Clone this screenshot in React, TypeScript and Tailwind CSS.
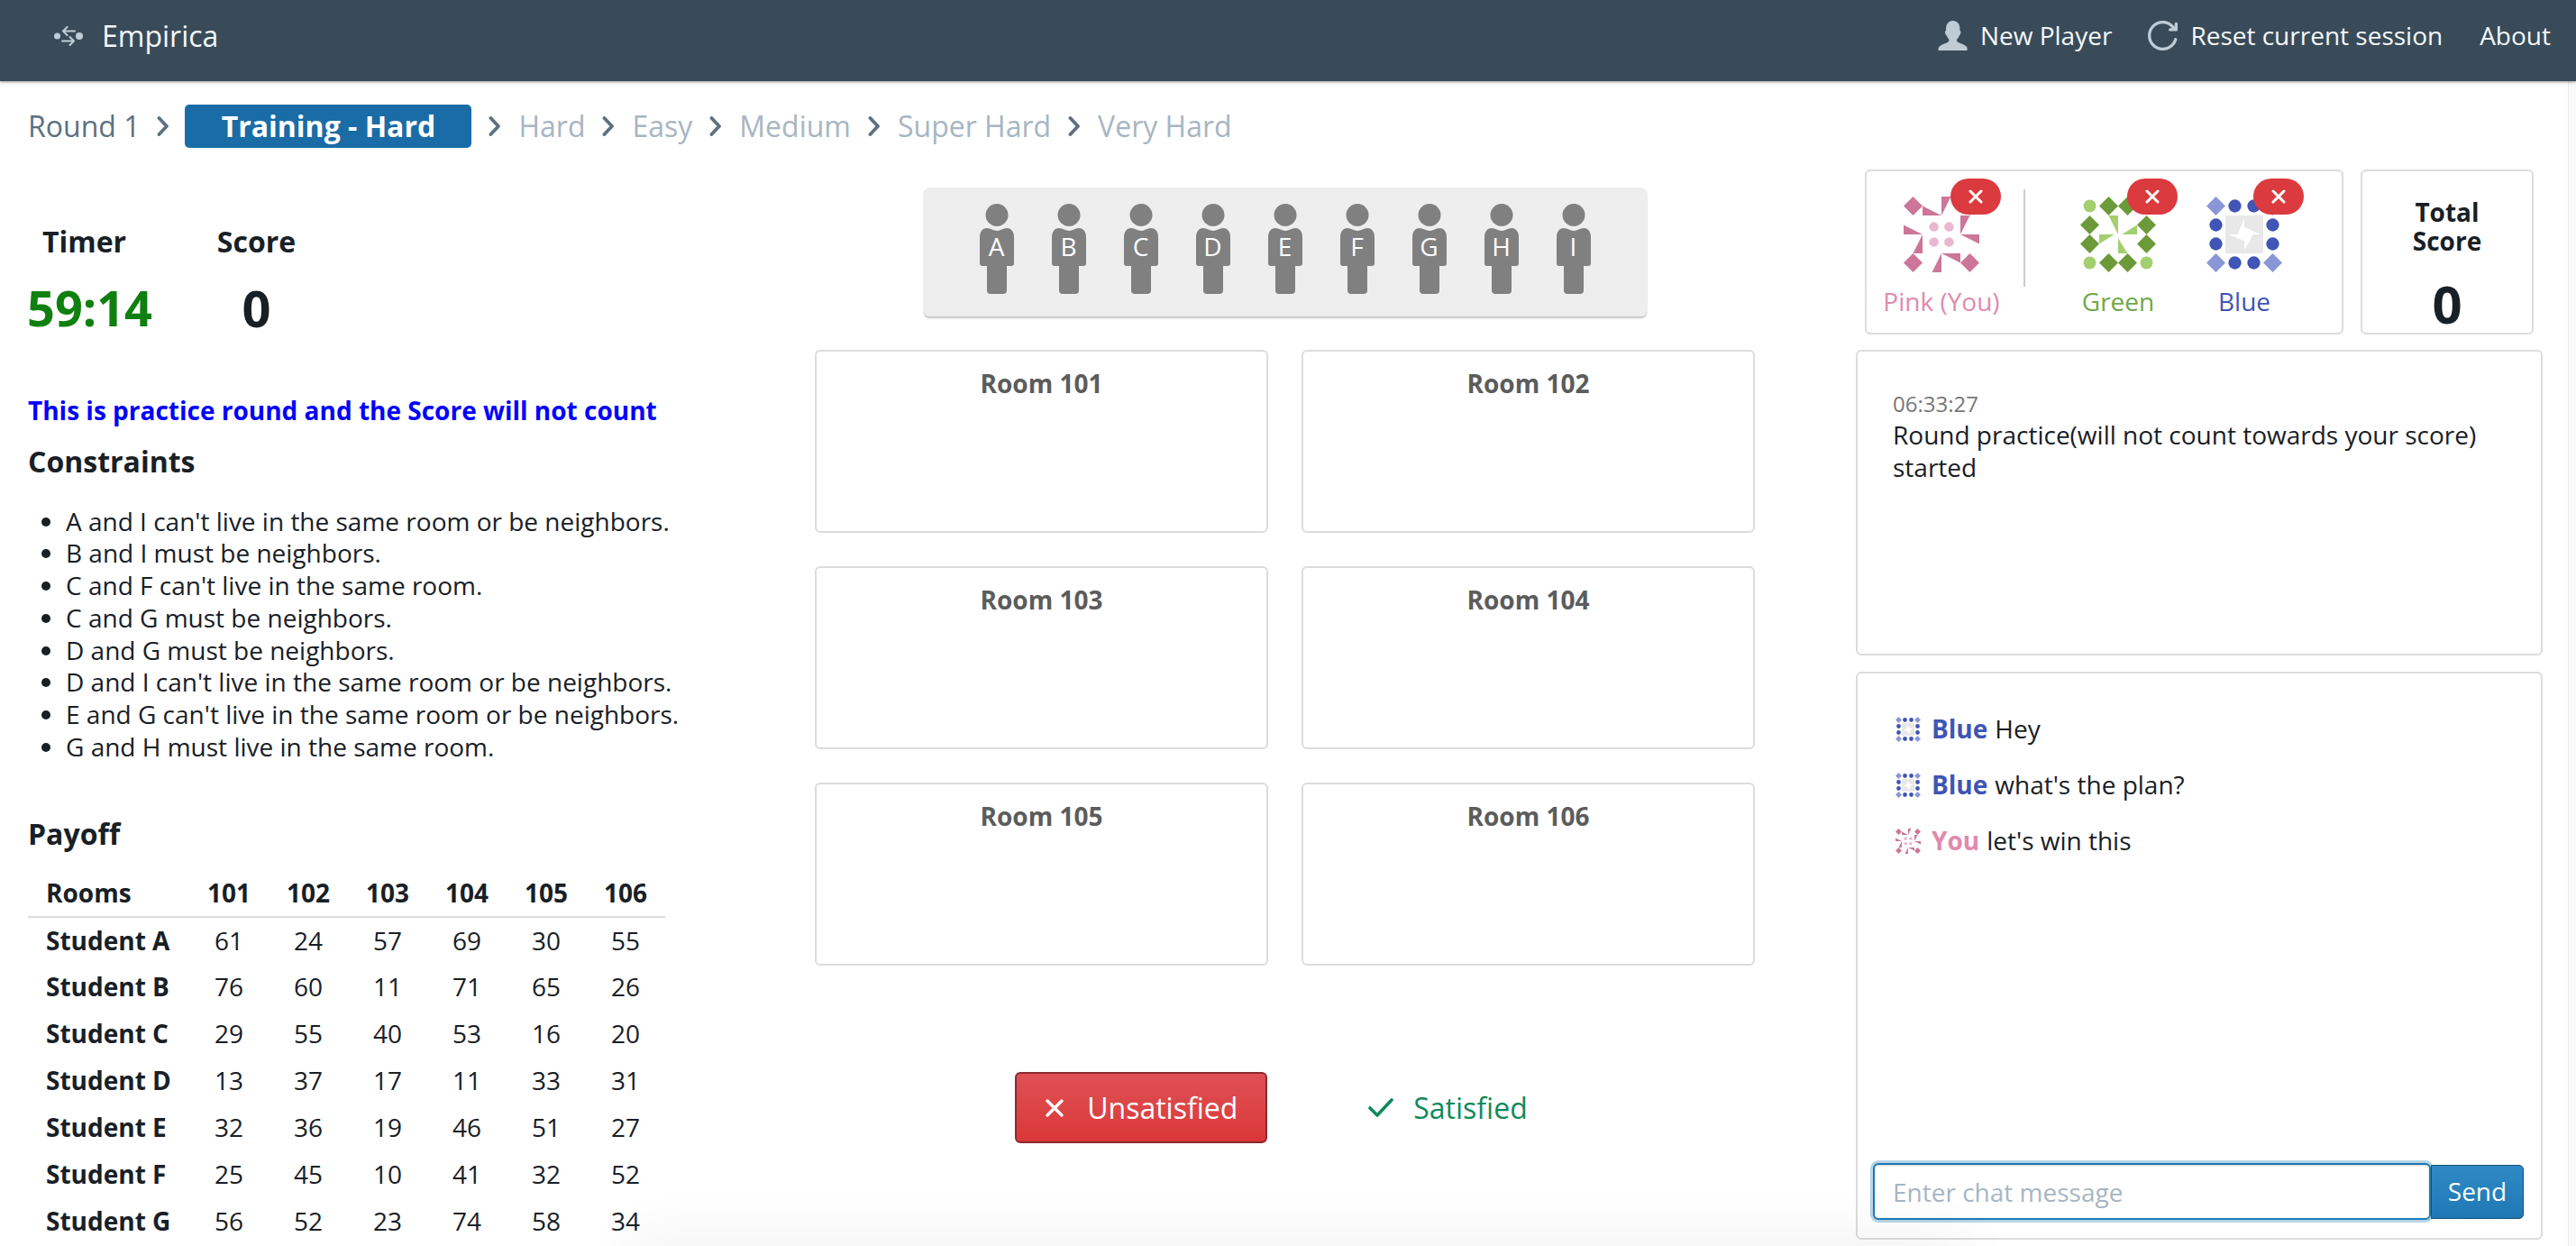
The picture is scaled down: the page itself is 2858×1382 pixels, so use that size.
const constraints = [
  "A and I can't live in the same room or be neighbors.",
  'B and I must be neighbors.',
  "C and F can't live in the same room.",
  'C and G must be neighbors.',
  'D and G must be neighbors.',
  "D and I can't live in the same room or be neighbors.",
  "E and G can't live in the same room or be neighbors.",
  'G and H must live in the same room.',
];

const payoff: [string, number[]][] = [
  ['Student A', [61, 24, 57, 69, 30, 55]],
  ['Student B', [76, 60, 11, 71, 65, 26]],
  ['Student C', [29, 55, 40, 53, 16, 20]],
  ['Student D', [13, 37, 17, 11, 33, 31]],
  ['Student E', [32, 36, 19, 46, 51, 27]],
  ['Student F', [25, 45, 10, 41, 32, 52]],
  ['Student G', [56, 52, 23, 74, 58, 34]],
];

const upcoming = ['Hard', 'Easy', 'Medium', 'Super Hard', 'Very Hard'];
const students = ['A', 'B', 'C', 'D', 'E', 'F', 'G', 'H', 'I'];
const rooms = [101, 102, 103, 104, 105, 106];

function Chevron() {
  return (
    <svg width="14" height="22" viewBox="0 0 14 22" className="mx-[19px] shrink-0">
      <path d="M2.5 2 L11 11 L2.5 20" fill="none" stroke="#5c7080" strokeWidth="3.8" strokeLinecap="round" strokeLinejoin="round" />
    </svg>
  );
}

function Diamond({ x, y, fill }: { x: number; y: number; fill: string }) {
  return <polygon points={`${x + 0.5},${y} ${x + 1},${y + 0.5} ${x + 0.5},${y + 1} ${x},${y + 0.5}`} fill={fill} />;
}

function PinkIcon({ size = 84 }: { size?: number }) {
  const c = '#cc7799';
  return (
    <svg width={size} height={size} viewBox="0 0 4 4">
      <Diamond x={0} y={0} fill={c} />
      <Diamond x={3} y={0} fill={c} />
      <Diamond x={0} y={3} fill={c} />
      <Diamond x={3} y={3} fill={c} />
      <g fill={c}>
        <polygon points="1,0.5 1,1 2,1" />
        <polygon points="2,0 2.5,0 2,1" />
        <polygon points="3,1 3.5,1 3,2" />
        <polygon points="3,2 4,2 4,2.5" />
        <polygon points="0,1.5 1,2 0,2" />
        <polygon points="1,2 1,3 0.5,3" />
        <polygon points="2,3 3,3 3,3.5" />
        <polygon points="2,3 2,4 1.5,4" />
      </g>
      <g fill="#e8b8d0">
        <circle cx="1.6" cy="1.6" r="0.25" />
        <circle cx="2.4" cy="1.6" r="0.25" />
        <circle cx="1.6" cy="2.4" r="0.25" />
        <circle cx="2.4" cy="2.4" r="0.25" />
      </g>
    </svg>
  );
}

function GreenIcon({ size = 84 }: { size?: number }) {
  const dark = '#6d9a38';
  const light = '#a3cf6f';
  return (
    <svg width={size} height={size} viewBox="0 0 4 4">
      {[[1, 0], [2, 0], [0, 1], [0, 2], [3, 1], [3, 2], [1, 3], [2, 3]].map(([x, y]) => (
        <Diamond key={`${x}${y}`} x={x} y={y} fill={dark} />
      ))}
      <g fill={light}>
        <circle cx="0.5" cy="0.5" r="0.33" />
        <circle cx="3.5" cy="0.5" r="0.33" />
        <circle cx="0.5" cy="3.5" r="0.33" />
        <circle cx="3.5" cy="3.5" r="0.33" />
        <polygon points="1.5,1 2,1 2,2" />
        <polygon points="3,1.5 3,2 2.2,2" />
        <polygon points="1,2 1.8,2 1,2.5" />
        <polygon points="2,2.2 2,3 2.5,3" />
      </g>
    </svg>
  );
}

function BlueIcon({ size = 84 }: { size?: number }) {
  const light = '#8a97d6';
  const dark = '#4055b5';
  return (
    <svg width={size} height={size} viewBox="0 0 4 4">
      <rect x="1" y="1" width="2" height="2" fill="#e8e8e8" />
      <polygon points="2,1.16 1.65,2 1.17,2 2,2.35 2,2.83 2.48,2 2.83,2 2,1.6" fill="#ffffff" />
      <Diamond x={0} y={0} fill={light} />
      <Diamond x={3} y={0} fill={light} />
      <Diamond x={0} y={3} fill={light} />
      <Diamond x={3} y={3} fill={light} />
      <g fill={dark}>
        {[[1.5, 0.5], [2.5, 0.5], [0.5, 1.5], [0.5, 2.5], [3.5, 1.5], [3.5, 2.5], [1.5, 3.5], [2.5, 3.5]].map(([x, y]) => (
          <circle key={`${x}${y}`} cx={x} cy={y} r="0.34" />
        ))}
      </g>
    </svg>
  );
}

function KickBadge() {
  return (
    <span className="absolute right-[-24px] top-[-20px] flex h-[40px] w-[56px] items-center justify-center rounded-full bg-[#db3a3f]">
      <svg width="16" height="16" viewBox="0 0 16 16">
        <path d="M2 2 L14 14 M14 2 L2 14" stroke="#ffffff" strokeWidth="3" strokeLinecap="round" />
      </svg>
    </span>
  );
}

function Person({ letter }: { letter: string }) {
  return (
    <div className="relative h-[100px] w-[38px]">
      <svg width="38" height="100" viewBox="0 0 38 100" fill="#808080">
        <ellipse cx="19" cy="12.5" rx="12.5" ry="12.5" />
        <path d="M0 37 C0 31 3 27 8 27 C12 27 15 30 19 30 C23 30 26 27 30 27 C35 27 38 31 38 37 L38 66 Q38 69 35 69 L30 69 L30 96 Q30 100 26 100 L12 100 Q8 100 8 96 L8 69 L3 69 Q0 69 0 66 Z" />
      </svg>
      <span className="absolute inset-x-0 top-[28px] text-center text-[28px] leading-[38px] text-white">{letter}</span>
    </div>
  );
}

function ChatLine({ icon, name, color, text }: { icon: React.ReactNode; name: string; color: string; text: string }) {
  return (
    <div className="flex h-[62px] items-center text-[28px] text-[#182026]">
      <span className="mr-[12px] flex">{icon}</span>
      <span className={`mr-[8px] font-bold ${color}`}>{name}</span>
      {text}
    </div>
  );
}

export default function App() {
  return (
    <div className="relative h-[1382px] w-full overflow-hidden bg-white font-['Open_Sans',sans-serif] text-[28px] leading-[35.7px] text-[#182026]">
      <nav className="relative z-10 flex h-[90px] items-center justify-between bg-[#394b59] pb-[10px] pr-[28px] text-[28px] text-[#f5f8fa] shadow-[0_1px_3px_rgba(16,22,26,0.45)]">
        <div className="flex items-center pl-[60px]">
          <svg width="32" height="22" viewBox="0 0 32 22" className="mr-[21px]">
            <circle cx="3.5" cy="11" r="3.5" fill="#bfccd6" />
            <circle cx="28" cy="11" r="4" fill="#bfccd6" />
            <path d="M23 5.5 H10 M14.5 1 L10 5.5 L14.5 10 M9 16.5 H22 M17.5 12 L22 16.5 L17.5 21" fill="none" stroke="#bfccd6" strokeWidth="2" strokeLinecap="round" strokeLinejoin="round" />
          </svg>
          <span className="text-[32px]">Empirica</span>
        </div>
        <div className="flex items-center">
          <svg width="33" height="33" viewBox="0 0 20 20" fill="#bfccd6" className="mr-[14px]">
            <path d="M19.61 17.91c-.57-1.32-3.35-2.19-5.19-3.01-1.85-.82-1.59-1.31-1.66-1.99-.01-.09-.01-.19-.02-.29.63-.56 1.15-1.33 1.49-2.22.07-.19.13-.39.19-.6.42-.09.67-.55.76-.98.1-.17.29-.6.25-1.08-.06-.62-.31-.91-.59-1.03v-.11c0-.79-.07-1.93-.22-2.68-.03-.21-.08-.41-.14-.62-.27-.92-.84-1.74-1.61-2.33C11.96.32 11.06 0 10.06 0c-.96 0-1.86.32-2.65.89-.78.59-1.36 1.41-1.63 2.33-.06.21-.11.41-.14.62-.15.75-.22 1.89-.22 2.68v.1c-.28.12-.53.41-.59 1.03-.04.48.15.91.25 1.08.09.43.34.89.76.98.06.21.12.41.19.6.34.89.86 1.66 1.49 2.22-.01.1-.01.2-.02.29-.07.68.19 1.17-1.66 1.99-1.84.82-4.62 1.69-5.19 3.01C.11 19.23.34 20 .34 20h19.32s.23-.77-.05-2.09z" />
          </svg>
          <span>New Player</span>
          <svg width="33" height="33" viewBox="0 0 20 20" fill="#bfccd6" className="ml-[40px] mr-[14px]">
            <path d="M19 1c-.55 0-1 .45-1 1v2.06C16.18 1.61 13.29 0 10 0 4.48 0 0 4.48 0 10s4.48 10 10 10c4.53 0 8.35-3.02 9.58-7.15.03-.1.05-.22.05-.33 0-.55-.45-1-1-1-.46 0-.84.31-.96.73C16.68 15.56 13.62 18 10 18c-4.42 0-8-3.58-8-8s3.58-8 8-8c2.52 0 4.76 1.18 6.22 3H15c-.55 0-1 .45-1 1s.45 1 1 1h4c.55 0 1-.45 1-1V2c0-.55-.45-1-1-1z" />
          </svg>
          <span>Reset current session</span>
          <span className="ml-[41px]">About</span>
        </div>
      </nav>

      <div className="mt-[26px] flex h-[48px] items-center pl-[31px] text-[32px] text-[#a7b6c2]">
        <span className="text-[#5c7080]">Round 1</span>
        <Chevron />
        <span className="ml-[-2px] flex h-[48px] w-[318px] items-center justify-center rounded-[5px] bg-[#1a6ca6] font-bold text-white">Training - Hard</span>
        {upcoming.map((round) => (
          <span key={round} className="flex items-center">
            <Chevron />
            {round}
          </span>
        ))}
      </div>

      <div className="flex pl-[31px] pt-[24px]">
        <div className="w-[707px] shrink-0">
          <div className="mt-[60px] flex items-start">
            <div className="flex w-[137px] flex-col items-center">
              <div className="pr-[12px] text-[32px] font-bold leading-[40px]">Timer</div>
              <div className="mt-[16px] text-[54px] font-bold leading-[75px] text-[#0f800f]">59:14</div>
            </div>
            <div className="ml-[73px] flex w-[87px] flex-col items-center">
              <div className="text-[32px] font-bold leading-[40px]">Score</div>
              <div className="mt-[16px] text-[56px] font-bold leading-[75px]">0</div>
            </div>
          </div>
          <p className="mt-[59px] font-bold text-[#0000ff]">This is practice round and the Score will not count</p>
          <h4 className="mt-[18px] text-[32px] font-bold leading-[40px]">Constraints</h4>
          <ul className="mt-[29px] list-disc whitespace-nowrap pl-[42px]">
            {constraints.map((line) => (
              <li key={line}>{line}</li>
            ))}
          </ul>
          <h4 className="mt-[59px] text-[32px] font-bold leading-[40px]">Payoff</h4>
          <table className="mt-[20px] w-[707px] table-fixed border-collapse">
            <thead>
              <tr className="h-[52px] border-b-2 border-[#dcdcdc]">
                <th className="w-[179px] pl-[20px] text-left font-bold">Rooms</th>
                {rooms.map((room) => (
                  <th key={room} className="font-bold">{room}</th>
                ))}
              </tr>
            </thead>
            <tbody>
              {payoff.map(([student, values]) => (
                <tr key={student} className="h-[52px]">
                  <th className="pl-[20px] text-left font-bold">{student}</th>
                  {values.map((value, i) => (
                    <td key={i} className="text-center">{value}</td>
                  ))}
                </tr>
              ))}
            </tbody>
          </table>
        </div>

        <div className="ml-[166px] flex w-[1043px] shrink-0 flex-col items-center pt-[20px]">
          <div className="flex h-[143px] w-[802px] items-start justify-center gap-x-[42px] rounded-[6px] bg-[#eeeeee] pt-[18px] shadow-[0_2px_2px_rgba(16,22,26,0.25)]">
            {students.map((letter) => (
              <Person key={letter} letter={letter} />
            ))}
          </div>
          <div className="mt-[37px] grid w-full grid-cols-2 gap-x-[37px] gap-y-[37px]">
            {rooms.map((room) => (
              <div key={room} className="h-[203px] rounded-[6px] border-2 border-[#dcdcdc] pt-[18px] text-center font-bold text-[#5c5c5c]">
                Room {room}
              </div>
            ))}
          </div>
          <div className="mt-[118px] flex items-center text-[32px]">
            <button className="flex h-[79px] w-[280px] items-center justify-center rounded-[6px] border-2 border-[#8a2a2e] bg-gradient-to-b from-[#de5055] to-[#db3737] text-white">
              <svg width="22" height="22" viewBox="0 0 22 22" className="mr-[25px]">
                <path d="M3 3 L19 19 M19 3 L3 19" stroke="#ffffff" strokeWidth="3.4" strokeLinecap="round" />
              </svg>
              Unsatisfied
            </button>
            <button className="ml-[111px] flex h-[79px] items-center pr-[30px] text-[#0f8a5a]">
              <svg width="30" height="24" viewBox="0 0 30 24" className="mr-[21px]">
                <path d="M3 12 L11 20 L27 3" fill="none" stroke="#0f8a5a" strokeWidth="3.6" strokeLinecap="round" strokeLinejoin="round" />
              </svg>
              Satisfied
            </button>
          </div>
        </div>

        <div className="ml-[112px] w-[762px] shrink-0">
          <div className="flex gap-x-[19px] px-[10px]">
            <div className="relative flex h-[183px] w-[531px] rounded-[6px] border-2 border-[#dcdcdc] pt-[28px]">
              <div className="flex w-[166px] flex-col items-center">
                <div className="relative"><PinkIcon /><KickBadge /></div>
                <div className="mt-[15px] text-[#e08aae]">Pink (You)</div>
              </div>
              <div className="ml-[8px] mt-[-8px] h-[108px] w-[2px] bg-[#cccccc]" />
              <div className="ml-[33px] flex w-[140px] flex-col items-center">
                <div className="relative"><GreenIcon /><KickBadge /></div>
                <div className="mt-[15px] text-[#6fa84a]">Green</div>
              </div>
              <div className="flex w-[140px] flex-col items-center">
                <div className="relative"><BlueIcon /><KickBadge /></div>
                <div className="mt-[15px] text-[#3f54b5]">Blue</div>
              </div>
            </div>
            <div className="flex h-[183px] w-[192px] flex-col items-center rounded-[6px] border-2 border-[#dcdcdc] pt-[29px] text-center font-bold leading-[32px]">
              <div>Total<br />Score</div>
              <div className="mt-[16px] text-[58px] leading-[75px]">0</div>
            </div>
          </div>
          <div className="mt-[17px] h-[339px] rounded-[6px] border-2 border-[#dcdcdc] px-[39px] pt-[42px]">
            <div className="text-[24px] leading-[32px] text-[#777777]">06:33:27</div>
            <div className="mt-[1px] w-[680px]">Round practice(will not count towards your score) started</div>
          </div>
          <div className="mt-[18px] flex h-[630px] flex-col rounded-[6px] border-2 border-[#dcdcdc] pl-[42px] pr-[19px] pt-[31px]">
            <ChatLine icon={<BlueIcon size={28} />} name="Blue" color="text-[#3f54b5]" text="Hey" />
            <ChatLine icon={<BlueIcon size={28} />} name="Blue" color="text-[#3f54b5]" text="what's the plan?" />
            <ChatLine icon={<PinkIcon size={28} />} name="You" color="text-[#e08aae]" text="let's win this" />
            <div className="mt-auto mb-[20px] ml-[-25px] flex items-center">
              <input
                placeholder="Enter chat message"
                className="h-[63px] w-[619px] rounded-[6px] border-2 border-[#1c7ab5] bg-white px-[20px] text-[28px] shadow-[0_0_0_3px_#b7d5e8,inset_0_1px_2px_rgba(16,22,26,0.2)] outline-none placeholder:text-[#a7b6c2]"
              />
              <button className="h-[60px] w-[103px] rounded-r-[5px] border border-[#14506f] bg-gradient-to-b from-[#2f8ac4] to-[#1f78b4] text-[28px] text-white">Send</button>
            </div>
          </div>
        </div>
      </div>

      {/* shadow of whatever sits just below the fold, plus the page scrollbar track */}
      <div className="pointer-events-none absolute left-[700px] top-[1382px] h-[20px] w-[1480px] shadow-[0_0_60px_rgba(0,0,0,0.13)]" />
      <div className="pointer-events-none absolute bottom-0 right-0 top-[90px] w-[9px] border-l border-[#ececec] bg-[#fafafa]" />
    </div>
  );
}
